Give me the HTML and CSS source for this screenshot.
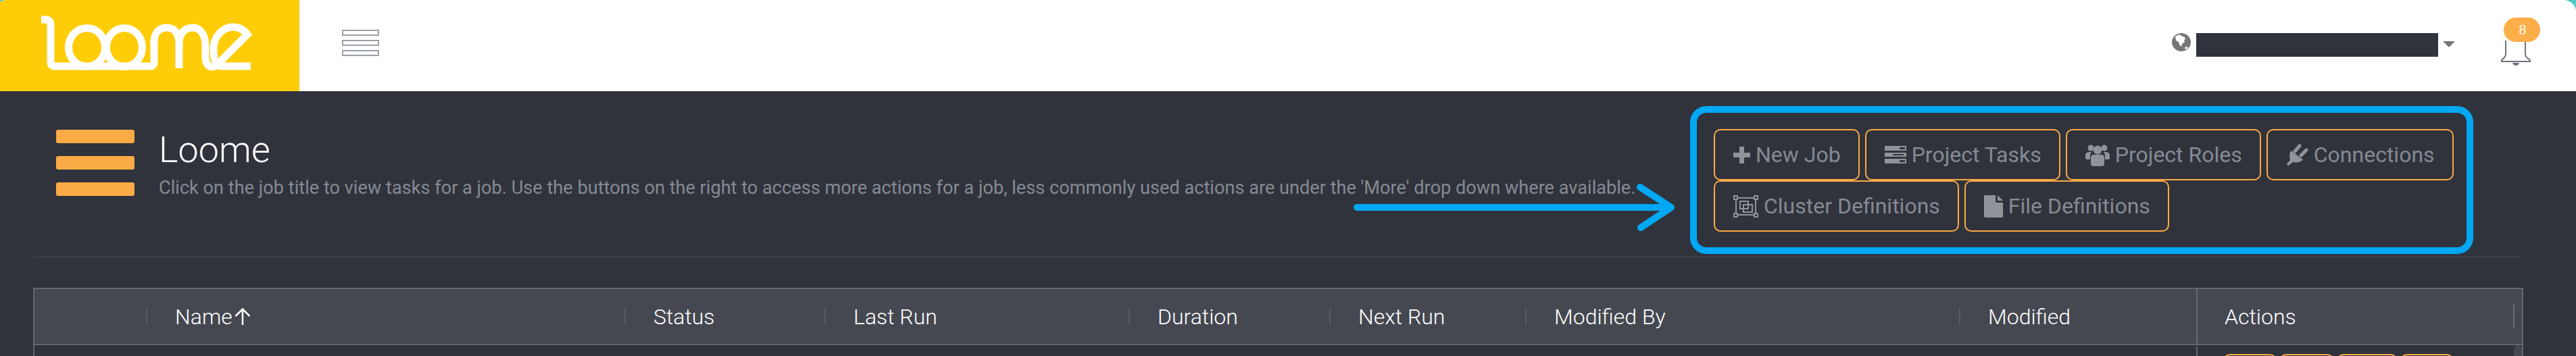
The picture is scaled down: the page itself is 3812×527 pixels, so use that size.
FILE: index.html
```html
<!DOCTYPE html>
<html lang="en">
<head>
<meta charset="utf-8">
<title>Loome</title>
<link rel="stylesheet" href="styles.css">
</head>
<body>
<div class="app">
  <header class="topbar">
    <a class="brand" aria-label="Loome">
      <svg class="brand-logo" width="443" height="135" viewBox="0 0 443 135" fill="none" stroke="#fff" stroke-width="11">
        <path d="M61 29H68Q75 29 75 37V92Q75 98 81 98H222Q228 98 228 92V62C228 46 238 41 247 41C258 41 265 50 265 64V101M265 64C265 48 275 41 285 41C297 41 304 52 304 68V84C304 94 308 99 314 99C320 99 325 94 329 88L366 51C360 43 352 40 345 40C328 40 316 56 316 72C316 88 320 98 326 98H371"/>
        <ellipse cx="128.500" cy="70" rx="27" ry="28.500"/>
        <ellipse cx="184" cy="70" rx="26.500" ry="28.500"/>
      </svg>
    </a>
    <div class="nav-toggle"><span></span><span></span><span></span></div>
    <div class="user-menu">
      <svg class="globe" width="28" height="27" viewBox="0 0 28 27"><ellipse cx="14" cy="13.500" rx="14" ry="13.500" fill="#777"/><path d="M5 5L11 2L14 4L19 6L20 9L18 10L19 13L15 16L14 20L11 17L10 13L6 11Z" fill="#fff"/><path d="M20 20L24 21L22 24L19 23Z" fill="#fff"/></svg>
      <div class="user-name"></div>
      <div class="caret"></div>
    </div>
    <div class="bell-wrap">
      <svg class="bell" width="44" height="40" viewBox="0 0 44 40" fill="none" stroke="#6d737c" stroke-width="2"><path d="M7 2V22Q7 25 5 27L1 31V33H43V31L38 27Q36 25 36 22V2"/><path d="M17 35H27Q26 39 22 39Q18 39 17 35Z" fill="#6d737c" stroke="none"/></svg>
      <span class="badge">8</span>
    </div>
  </header>
  <main class="content">
    <section class="page-head">
      <div class="page-icon"><span></span><span></span><span></span></div>
      <div class="page-text">
        <h1>Loome</h1>
        <p>Click on the job title to view tasks for a job. Use the buttons on the right to access more actions for a job, less commonly used actions are under the 'More' drop down where available.</p>
      </div>
      <div class="page-actions">
        <a class="btn"><svg width="25" height="25" viewBox="0 0 25 25"><path class="ico" d="M9 0H16V9H25V16H16V25H9V16H0V9H9Z"/></svg>New Job</a>
        <a class="btn"><svg width="32" height="26" viewBox="0 0 32 26"><path class="ico" fill-rule="evenodd" d="M0 0H32V7H0ZM22 2V5H30V2ZM0 10H32V16H0ZM12 12V14H28V12ZM0 19H32V26H0ZM22 21V24H30V21Z"/></svg>Project Tasks</a>
        <a class="btn"><svg width="36" height="33" viewBox="0 0 36 33"><g class="ico"><circle cx="8" cy="6" r="4.500"/><circle cx="28" cy="6" r="4.500"/><circle cx="18" cy="9" r="6.500"/><path d="M0 18Q0 12 5 12H9Q7 14 7 18V23H2Q0 23 0 21ZM36 18Q36 12 31 12H27Q29 14 29 18V23H34Q36 23 36 21Z"/><path d="M12 16H24Q28 16 28 21V29Q28 33 24 33H12Q8 33 8 29V21Q8 16 12 16Z"/></g></svg>Project Roles</a>
        <a class="btn"><svg width="33" height="33" viewBox="0 0 33 33"><path class="ico-line" d="M20 3L13 11M30 9L22 17"/><path class="ico" d="M7 10L25 23Q22 27 15 27.500L10 27L3 32.500L0.500 30L6 24Q4 16 7 10Z"/></svg>Connections</a>
        <a class="btn"><svg width="37" height="33" viewBox="0 0 37 33" fill="none" stroke="#8f949b" stroke-width="2"><path d="M4 4H33V29H4Z"/><rect x="1" y="1" width="5" height="5" fill="#30333c"/><rect x="31" y="1" width="5" height="5" fill="#30333c"/><rect x="1" y="27" width="5" height="5" fill="#30333c"/><rect x="31" y="27" width="5" height="5" fill="#30333c"/><rect x="10" y="9" width="12" height="11"/><rect x="15" y="14" width="13" height="11"/></svg>Cluster Definitions</a>
        <a class="btn"><svg width="28" height="33" viewBox="0 0 28 33"><path class="ico" d="M1 0H17V9Q17 11 19 11H28V31Q28 33 26 33H2Q0 33 0 31V1Q0 0 1 0ZM20 0L28 8H20Z"/></svg>File Definitions</a>
      </div>
      <div class="callout-box"></div>
      <svg class="callout-arrow" width="480" height="76" viewBox="0 0 480 76" fill="none" stroke="#00a8f4" stroke-width="10" stroke-linecap="round" stroke-linejoin="round"><path d="M5 38H470M424 8L470 38L425 68"/></svg>
    </section>
    <section class="jobs">
      <div class="jobs-head">
        <div class="cell"></div>
        <div class="cell"><i class="sep"></i>Name<svg class="sort" width="24" height="25" viewBox="0 0 24 25" fill="none" stroke="#fff" stroke-width="2.500"><path d="M12 1V25M1.500 12L12 1.500L22.500 12"/></svg></div>
        <div class="cell"><i class="sep"></i>Status</div>
        <div class="cell"><i class="sep"></i>Last Run</div>
        <div class="cell"><i class="sep"></i>Duration</div>
        <div class="cell"><i class="sep"></i>Next Run</div>
        <div class="cell"><i class="sep"></i>Modified By</div>
        <div class="cell"><i class="sep"></i>Modified</div>
        <div class="cell cell-actions">Actions<i class="sep-end"></i></div>
      </div>
      <div class="jobs-row">
        <div class="row-main"></div>
        <div class="row-actions"><a class="mini w79"></a><a class="mini w81"></a><a class="mini w90"></a><a class="mini w79"></a></div>
        <div class="thumb"></div>
      </div>
    </section>
  </main>
</div>
</body>
</html>
```
FILE: styles.css
```css
* { box-sizing: border-box; }
html, body { margin: 0; padding: 0; height: 100%; overflow: hidden; }
body { font-family: Roboto, "Liberation Sans", sans-serif; background: #30333c; }
.app { width: 3812px; height: 527px; background: #52cbc8; overflow: hidden; }

.topbar { height: 135px; background: #fff; display: flex; align-items: flex-start; border-radius: 11px 19px 0 0 / 4px 17px 0 0; overflow: hidden; }
.brand { width: 443px; height: 135px; background: #ffcd07; flex: none; display: block; }
.brand-logo { display: block; }
.nav-toggle { margin: 44px 0 0 63px; width: 55px; display: flex; flex-direction: column; gap: 6px; }
.nav-toggle span { display: block; height: 9px; border: 2px solid #9aa0a8; }
.user-menu { margin: 49px 0 0 auto; display: flex; align-items: flex-start; }
.globe { display: block; }
.user-name { width: 358px; height: 35px; background: #30333c; margin-left: 8px; }
.caret { margin: 12px 0 0 7px; width: 0; height: 0; border-left: 9px solid transparent; border-right: 9px solid transparent; border-top: 9px solid #777; }
.bell-wrap { position: relative; width: 110px; height: 100px; margin: 0 0 0 69px; flex: none; }
.bell { position: absolute; left: -1px; top: 58px; }
.badge { position: absolute; left: 3px; top: 26px; width: 54px; height: 36px; border-radius: 18px; background: #fcae48; color: #fff; font: 22px/36px "Liberation Serif", serif; text-align: center; padding-left: 2px; }

.content { height: 392px; background: #30333c; padding: 0 78px 0 49px; }
.page-head { position: relative; height: 246px; border-bottom: 2px solid #3a3b47; display: flex; align-items: flex-start; }
.page-icon { margin: 57px 0 0 34px; width: 116px; display: flex; flex-direction: column; gap: 19px; flex: none; }
.page-icon span { display: block; height: 20px; background: #fbab45; border-radius: 3px; }
.page-text { margin: 57px 0 0 36px; flex: none; width: 2230px; }
.page-text h1 { margin: 0; font-size: 54px; line-height: 60px; font-weight: 300; color: #fff; }
.page-text p { margin: 8px 0 0; font-size: 27.160px; line-height: 36px; font-weight: 400; color: #858a92; white-space: nowrap; }
.page-actions { position: absolute; left: 2487px; top: 56px; width: 1110px; display: flex; flex-wrap: wrap; gap: 0 8px; }
.btn { height: 76px; padding: 0 26px 0 27px; border: 2px solid #fbab45; border-radius: 10px; display: flex; align-items: center; gap: 8px; font-size: 32px; color: #858a92; }
.btn svg { flex: none; display: block; }
.ico { fill: #8f949b; }
.ico-line { fill: none; stroke: #8f949b; stroke-width: 5; stroke-linecap: round; }
.callout-box { position: absolute; left: 2452px; top: 22px; width: 1159px; height: 219px; border: 10px solid #00a8f4; border-radius: 24px; }
.callout-arrow { position: absolute; left: 1954px; top: 134px; }

.jobs { margin-top: 45px; width: 3685px; height: 101px; border: 2px solid #66666e; border-bottom: 0; }
.jobs-head { height: 83px; background: #454851; border-bottom: 2px solid #66666e; display: grid; grid-template-columns: 165px 708px 296px 450px 297px 290px 642px 351px 1fr; }
.cell { display: flex; align-items: center; font-size: 32px; font-weight: 300; color: #fff; white-space: nowrap; }
.sep { display: block; width: 2px; height: 25px; background: #5a5c65; margin-right: 41px; flex: none; }
.sort { margin-left: 3px; flex: none; }
.cell-actions { border-left: 2px solid #66666e; padding-left: 40px; }
.sep-end { display: block; width: 2px; height: 36px; background: #6b6d76; margin-left: auto; margin-right: 11px; }
.jobs-row { position: relative; height: 16px; overflow: hidden; display: grid; grid-template-columns: 3199px 1fr; }
.row-actions { border-left: 2px solid #66666e; padding: 11px 0 0 38px; display: flex; gap: 4px; margin-top: 2px; }
.mini { display: block; height: 40px; border: 2px solid #fbab45; border-radius: 10px; flex: none; }
.w79 { width: 79px; }
.w81 { width: 81px; }
.w90 { width: 90px; }
.thumb { position: absolute; right: 0; top: 0; width: 12px; height: 30px; background: #454851; border-radius: 6px 6px 0 0; }
```
